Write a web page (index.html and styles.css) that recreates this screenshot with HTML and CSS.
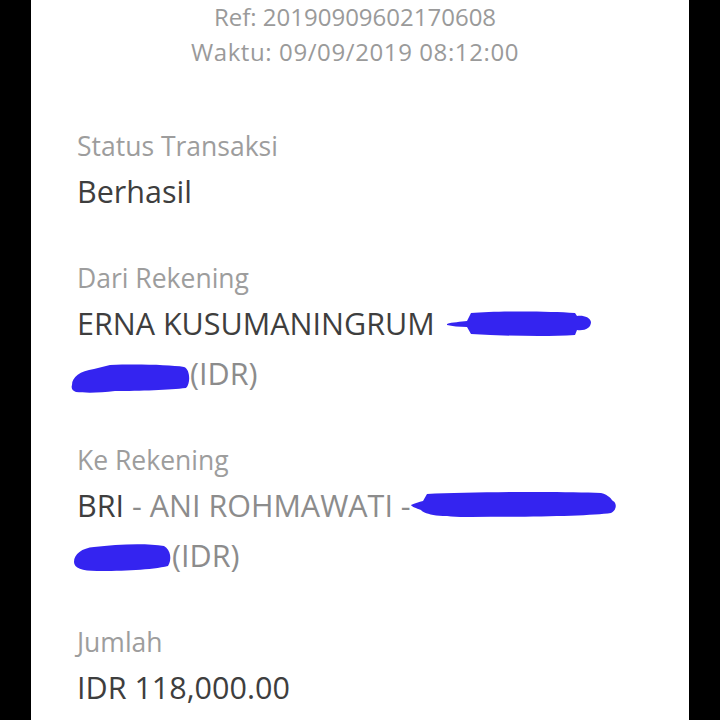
FILE: index.html
```html
<!DOCTYPE html>
<html lang="id">
<head>
<meta charset="utf-8">
<title>Detail Transaksi</title>
<link rel="stylesheet" href="styles.css">
</head>
<body>
<main class="screen">
  <header class="meta">
    <div class="meta-line">Ref: 20190909602170608</div>
    <div class="meta-line meta-time">Waktu: 09/09/2019 08:12:00</div>
  </header>

  <section class="field">
    <div class="label">Status Transaksi</div>
    <div class="value">Berhasil</div>
  </section>

  <section class="field">
    <div class="label">Dari Rekening</div>
    <div class="value">ERNA KUSUMANINGRUM <svg class="mark mark-a" width="145" height="28" viewBox="0 0 145 28"><path d="M0 14 C5 12 14 12 20 11 L24 3 C50 1 100 1 128 3 L130 6 C136 5 143 7 144 12 C144 18 138 21 130 20 L128 25 C100 27 60 26 24 24 L20 17 C12 17 5 16 0 15 Z"/></svg> <svg class="mark mark-b" width="120" height="30" viewBox="0 0 120 30"><path d="M2 22 C2 14 10 8 24 6 L40 2 C70 1 100 2 114 4 C120 6 121 20 116 25 C100 27 70 28 45 28 C30 30 15 30 6 29 C2 28 1 25 2 22 Z"/></svg><span class="muted">(IDR)</span></div>
  </section>

  <section class="field">
    <div class="label">Ke Rekening</div>
    <div class="value">BRI<span class="muted"> - ANI ROHMAWATI -</span><svg class="mark mark-c" width="206" height="30" viewBox="0 0 206 30"><path d="M0 15 C4 13 8 12 12 11 L16 4 C60 2 150 1 190 3 C198 5 200 9 202 11 C206 13 206 20 200 23 C180 26 120 27 60 27 C30 27 14 25 10 20 C5 18 1 17 0 15 Z"/></svg> <svg class="mark mark-d" width="100" height="30" viewBox="0 0 100 30"><path d="M2 20 C2 12 10 6 22 5 C45 2 75 1 92 4 C99 8 100 18 96 24 C80 28 50 29 25 29 C10 29 2 26 2 20 Z"/></svg><span class="muted">(IDR)</span></div>
  </section>

  <section class="field">
    <div class="label">Jumlah</div>
    <div class="value">IDR 118,000.00</div>
  </section>
</main>
</body>
</html>
```

FILE: styles.css
```css
html, body {
  margin: 0;
  padding: 0;
  background: #000;
}

body {
  font-family: "Open Sans", "Noto Sans", sans-serif;
}

.screen {
  margin: 0 31px;
  min-height: 720px;
  background: #fff;
  padding: 0 46px;
  overflow: hidden;
}

.meta {
  padding-right: 10px;
  text-align: center;
  color: #9a9a9a;
  font-size: 24px;
  line-height: 33px;
  margin-bottom: 58px;
}

.meta-time {
  margin-top: 2px;
  letter-spacing: 0.6px;
}

.field {
  margin-bottom: 42px;
}

.label {
  font-size: 26.5px;
  line-height: 40px;
  color: #9d9d9d;
}

.value {
  font-size: 30.5px;
  line-height: 50px;
  color: #3e3e3e;
}

.muted {
  color: #8c8c8c;
}

.mark {
  fill: #3424f0;
  display: inline-block;
}

.mark-a {
  margin-left: 4px;
  vertical-align: -3px;
}

.mark-b {
  margin-left: -7px;
  vertical-align: -8px;
}

.mark-c {
  vertical-align: -3px;
}

.mark-d {
  margin-left: -5px;
  vertical-align: -5px;
}
```
